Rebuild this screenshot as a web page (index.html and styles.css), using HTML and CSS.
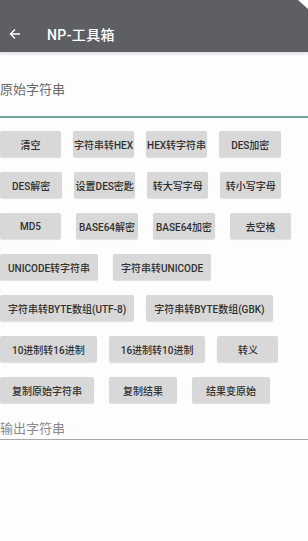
FILE: index.html
```html
<!DOCTYPE html>
<html lang="zh-CN">
<head>
    <meta charset="UTF-8">
    <meta name="viewport" content="width=device-width, initial-scale=1.0">
    <title>NP-工具箱</title>
    <link rel="stylesheet" href="styles.css">
</head>
<body>
    <div class="toolbar">
        <span class="status-icon"></span>
        <div class="toolbar-row">
            <svg class="back" width="12" height="12" viewBox="0 0 12 12">
                <path d="M11 6H1.5M6 1.5L1.5 6L6 10.5" fill="none" stroke="#fff" stroke-width="1.4"/>
            </svg>
            <span class="title">NP-工具箱</span>
        </div>
    </div>

    <div class="field focused">
        <span class="hint">原始字符串</span>
    </div>

    <div class="buttons">
        <div class="row">
            <button class="btn">清空</button>
            <button class="btn tight">字符串转HEX</button>
            <button class="btn tight">HEX转字符串</button>
            <button class="btn">DES加密</button>
        </div>
        <div class="row">
            <button class="btn">DES解密</button>
            <button class="btn tight">设置DES密匙</button>
            <button class="btn tight">转大写字母</button>
            <button class="btn tight">转小写字母</button>
        </div>
        <div class="row wide">
            <button class="btn">MD5</button>
            <button class="btn tight b64">BASE64解密</button>
            <button class="btn tight b64">BASE64加密</button>
            <button class="btn">去空格</button>
        </div>
        <div class="row wide">
            <button class="btn mid">UNICODE转字符串</button>
            <button class="btn mid">字符串转UNICODE</button>
        </div>
        <div class="row">
            <button class="btn mid">字符串转BYTE数组(UTF-8)</button>
            <button class="btn mid">字符串转BYTE数组(GBK)</button>
        </div>
        <div class="row">
            <button class="btn">10进制转16进制</button>
            <button class="btn">16进制转10进制</button>
            <button class="btn">转义</button>
        </div>
        <div class="row wide">
            <button class="btn">复制原始字符串</button>
            <button class="btn loose">复制结果</button>
            <button class="btn loose">结果变原始</button>
        </div>
    </div>

    <div class="field output">
        <span class="hint">输出字符串</span>
    </div>
</body>
</html>
```

FILE: styles.css
```css
body {
    margin: 0;
    background-color: #fdfdfd;
    font-family: Roboto, "Noto Sans CJK SC", sans-serif;
    width: 308px;
    height: 541px;
    overflow: hidden;
}

.toolbar {
    background-color: #5e5f63;
    height: 52px;
    position: relative;
    box-shadow: 0 2px 3px rgba(0, 0, 0, 0.12);
}

.status-icon {
    position: absolute;
    top: 0;
    right: 0;
    width: 0;
    height: 0;
    border-left: 10px solid transparent;
    border-top: 9px solid #fff;
}

.toolbar-row {
    display: flex;
    align-items: center;
    padding-top: 26px;
    height: 16px;
}

.back {
    margin-left: 9px;
}

.title {
    margin-left: 26px;
    color: #fff;
    font-size: 14px;
    font-weight: 500;
    letter-spacing: 0.4px;
}

.field {
    border-bottom: 1px solid #9e9e9e;
}

.field.focused {
    margin-top: 27px;
    height: 37px;
    border-bottom: 2px solid #6fa79c;
}

.field.output {
    margin-top: 7px;
    height: 21px;
    border-bottom: 1px solid #a8a8a8;
}

.hint {
    display: block;
    font-size: 13px;
    color: #6a6a6a;
}

.field.output .hint {
    color: #8a8a8a;
}

.buttons {
    padding-top: 13px;
}

.row {
    display: flex;
    gap: 12px;
    margin-bottom: 15px;
}

.row.wide {
    gap: 15px;
}

.btn {
    flex: none;
    box-sizing: border-box;
    height: 26px;
    min-width: 61px;
    padding: 0 12px;
    border: none;
    border-radius: 2px;
    background-color: #d8d8d8;
    box-shadow: 0 1px 1px rgba(0, 0, 0, 0.12);
    color: #303030;
    font-family: Roboto, "Noto Sans CJK SC", sans-serif;
    font-size: 10px;
    font-weight: 500;
    white-space: nowrap;
}

.btn.tight {
    padding: 0 1px;
}

.btn.b64 {
    padding: 0 3px;
}

.btn.mid {
    padding: 0 8px;
}

.btn.loose {
    padding: 0 14px;
}
```
